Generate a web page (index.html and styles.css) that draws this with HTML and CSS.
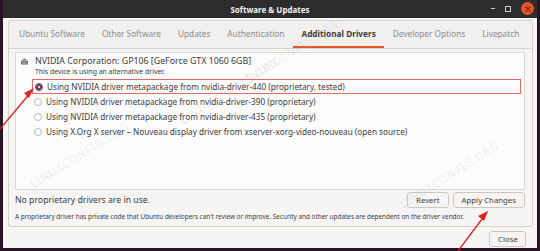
FILE: index.html
```html
<!DOCTYPE html>
<html>
<head>
    <meta charset="utf-8"/>
    <title>Software &amp; Updates</title>
    <link rel="stylesheet" href="styles.css">
</head>
<body>
    <div class="window">
        <!-- 타이틀 바 -->
        <div class="titlebar">
            <span class="title">Software &amp; Updates</span>
            <div class="controls">
                <span class="ctl-min"></span>
                <span class="ctl-max"></span>
                <span class="ctl-close">
                    <svg width="8" height="8" viewBox="0 0 8 8"><path d="M2 2 L6 6 M6 2 L2 6" stroke="#4a2a1e" stroke-width="1.2" stroke-linecap="round"/></svg>
                </span>
            </div>
        </div>

        <div class="body">
            <div class="notebook">
                <ul class="tabs">
                    <li>Ubuntu Software</li>
                    <li>Other Software</li>
                    <li>Updates</li>
                    <li>Authentication</li>
                    <li class="active">Additional Drivers</li>
                    <li>Developer Options</li>
                    <li>Livepatch</li>
                </ul>

                <div class="page">
                    <div class="device-list">
                        <div class="device">
                            <svg class="chip" width="9" height="8" viewBox="0 0 9 8">
                                <path d="M1 2.5 L4.5 0.5 L8 2.5 Z" fill="#6e6e6e"/>
                                <rect x="1" y="3" width="7" height="3.6" rx="0.5" fill="#6e6e6e"/>
                                <path d="M2 4.2 H7 M2 5.4 H7" stroke="#bdbdbd" stroke-width="0.6"/>
                            </svg>
                            <div>
                                <div class="device-name">NVIDIA Corporation: GP106 [GeForce GTX 1060 6GB]</div>
                                <div class="device-note">This device is using an alternative driver.</div>
                            </div>
                        </div>
                        <div class="options">
                            <div class="option marked"><span class="radio checked"></span>Using NVIDIA driver metapackage from nvidia-driver-440 (proprietary, tested)</div>
                            <div class="option"><span class="radio"></span>Using NVIDIA driver metapackage from nvidia-driver-390 (proprietary)</div>
                            <div class="option"><span class="radio"></span>Using NVIDIA driver metapackage from nvidia-driver-435 (proprietary)</div>
                            <div class="option"><span class="radio"></span>Using X.Org X server – Nouveau display driver from xserver-xorg-video-nouveau (open source)</div>
                        </div>
                    </div>

                    <div class="status-row">
                        <span class="status">No proprietary drivers are in use.</span>
                        <div class="buttons">
                            <button class="btn">Revert</button>
                            <button class="btn">Apply Changes</button>
                        </div>
                    </div>
                    <div class="hint">A proprietary driver has private code that Ubuntu developers can't review or improve. Security and other updates are dependent on the driver vendor.</div>
                </div>
            </div>

            <div class="footer">
                <button class="btn btn-close">Close</button>
            </div>
        </div>
    </div>

    <!-- 워터마크 -->
    <span class="wm wm1">LINUXCONFIG.ORG</span>
    <span class="wm wm2">LINUXCONFIG.ORG</span>
    <span class="wm wm3">LINUXCONFIG.ORG</span>
    <span class="wm wm4">LINUXCONFIG.ORG</span>

    <!-- 빨간 화살표 -->
    <svg class="arrows" width="540" height="251" viewBox="0 0 540 251">
        <path d="M0 129 L31 92" stroke="#e02020" stroke-width="1.3"/>
        <path d="M34 88 L24 93 L29 98 Z" fill="#e02020"/>
        <path d="M458 251 L485 215" stroke="#e02020" stroke-width="1.3"/>
        <path d="M488 211 L478 216 L484 221 Z" fill="#e02020"/>
    </svg>
</body>
</html>
```

FILE: styles.css
```css
body {
    margin: 0;
    width: 540px;
    height: 251px;
    overflow: hidden;
    background-color: #2a1526;
    font-family: "Noto Sans", sans-serif;
    color: #3d3d3d;
}

.window {
    margin: 0 3px;
    height: 248px;
    background-color: #f6f5f4;
    display: flex;
    flex-direction: column;
}

/* 타이틀 바 스타일 */
.titlebar {
    height: 18px;
    flex-shrink: 0;
    background-color: #2c2c2c;
    display: flex;
    align-items: center;
    justify-content: center;
    position: relative;
}
.title {
    color: #f2f2f2;
    font-size: 8px;
    font-weight: bold;
}
.controls {
    position: absolute;
    right: 3px;
    top: 2px;
    display: flex;
    align-items: center;
    gap: 10px;
}
.ctl-min {
    width: 4px;
    height: 1px;
    background-color: #cfcfcf;
}
.ctl-max {
    width: 4px;
    height: 4px;
    border: 1px solid #cfcfcf;
}
.ctl-close {
    width: 13px;
    height: 13px;
    border-radius: 50%;
    background-color: #e95420;
    display: flex;
    align-items: center;
    justify-content: center;
}

.body {
    flex: 1;
    padding: 2px 4px 0 5px;
    display: flex;
    flex-direction: column;
}

/* 노트북 탭 */
.notebook {
    border: 1px solid #d6d2cd;
    border-radius: 2px;
    background-color: #f6f5f4;
}
.tabs {
    display: flex;
    list-style: none;
    margin: 0;
    padding: 0 0 0 1.5px;
    height: 27px;
    border-bottom: 1px solid #d6d2cd;
    background-color: #f1f0ef;
}
.tabs li {
    font-size: 8.25px;
    color: #8c8c8c;
    padding: 0 8.5px;
    display: flex;
    align-items: center;
    border-bottom: 2px solid transparent;
}
.tabs li.active {
    color: #3d3d3d;
    font-weight: bold;
    border-bottom-color: #e95420;
}

.page {
    padding: 3px 7px 5px 6px;
}
.device-list {
    height: 133px;
    background-color: #fcfcfc;
    border: 1px solid #dcd8d3;
    padding: 3px 0 0 4px;
}
.device {
    display: flex;
    gap: 6px;
}
.chip {
    margin-top: 2px;
}
.device-name {
    font-size: 8.8px;
    line-height: 11px;
}
.device-note {
    font-size: 6.9px;
    line-height: 9px;
}
.options {
    margin-top: 3px;
    padding-left: 14px;
}
.option {
    font-size: 8.2px;
    height: 15px;
    display: flex;
    align-items: center;
    gap: 4px;
}
.option.marked {
    margin-left: -2px;
    padding-left: 2px;
    margin-right: 3px;
    border: 1px solid #e26a6a;
    height: 13px;
}
.radio {
    width: 6px;
    height: 6px;
    border-radius: 50%;
    border: 1px solid #bdb8b3;
    background-color: #fff;
}
.radio.checked {
    border-color: #6b3a63;
    background-color: #fff;
    box-shadow: inset 0 0 0 2px #6b3a63;
}

.status-row {
    display: flex;
    justify-content: space-between;
    align-items: center;
    margin-top: 2px;
}
.status {
    font-size: 8.7px;
}
.buttons {
    display: flex;
    gap: 4px;
}
.btn {
    font-family: "Noto Sans", sans-serif;
    font-size: 7.8px;
    color: #3d3d3d;
    background-color: #f6f5f4;
    border: 1px solid #cdc7c2;
    border-radius: 3px;
    height: 16px;
    padding: 0 8px;
}
.hint {
    font-size: 6.4px;
    margin-top: 4px;
}

.footer {
    display: flex;
    justify-content: flex-end;
    padding: 4px 7px 0 0;
}
.btn-close {
    width: 37px;
}

/* 워터마크 */
.wm {
    position: absolute;
    font-size: 11px;
    letter-spacing: 1px;
    color: transparent;
    -webkit-text-stroke: 0.3px rgba(140, 140, 140, 0.3);
    transform: rotate(-32deg);
    transform-origin: left bottom;
}
.wm1 { left: 35px; top: 176px; }
.wm2 { left: 185px; top: 112px; }
.wm3 { left: 405px; top: 196px; }
.wm4 { left: 245px; top: 74px; }

.arrows {
    position: absolute;
    left: 0;
    top: 0;
}
```
